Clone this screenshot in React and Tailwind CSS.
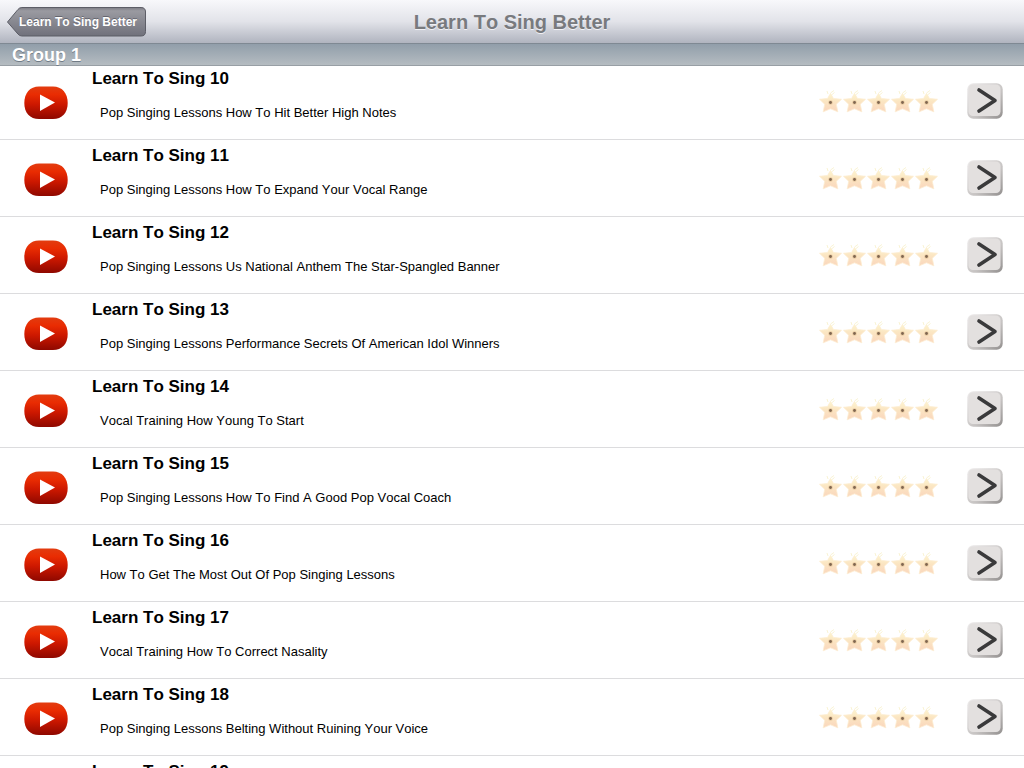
import React from "react";

const lessons = [
  { id: 10, text: "Pop Singing Lessons How To Hit Better High Notes" },
  { id: 11, text: "Pop Singing Lessons How To Expand Your Vocal Range" },
  { id: 12, text: "Pop Singing Lessons Us National Anthem The Star-Spangled Banner" },
  { id: 13, text: "Pop Singing Lessons Performance Secrets Of American Idol Winners" },
  { id: 14, text: "Vocal Training How Young To Start" },
  { id: 15, text: "Pop Singing Lessons How To Find A Good Pop Vocal Coach" },
  { id: 16, text: "How To Get The Most Out Of Pop Singing Lessons" },
  { id: 17, text: "Vocal Training How To Correct Nasality" },
  { id: 18, text: "Pop Singing Lessons Belting Without Ruining Your Voice" },
  { id: 19, text: "" },
];

function Gradients() {
  return (
    <svg width="0" height="0" className="absolute" aria-hidden="true">
      <defs>
        <linearGradient id="red" x1="0" y1="0" x2="0" y2="1">
          <stop offset="0" stopColor="#e23c10" />
          <stop offset="0.25" stopColor="#e92c02" />
          <stop offset="0.55" stopColor="#cd1800" />
          <stop offset="1" stopColor="#8e0800" />
        </linearGradient>
        <linearGradient id="star" x1="0" y1="0" x2="0" y2="1">
          <stop offset="0" stopColor="#fdf5cf" />
          <stop offset="0.45" stopColor="#fbe5c2" />
          <stop offset="1" stopColor="#fad6bd" />
        </linearGradient>
        <linearGradient id="key" x1="0" y1="0" x2="1" y2="1">
          <stop offset="0" stopColor="#efeded" />
          <stop offset="0.6" stopColor="#c6c3c2" />
          <stop offset="1" stopColor="#918e8d" />
        </linearGradient>
      </defs>
    </svg>
  );
}

function PlayIcon() {
  return (
    <svg width="44" height="34" viewBox="0 0 44 34" aria-hidden="true">
      <path
        d="M15 .5H29C38 .5 43.700 7 43.700 17S38 33 29 33H15C6 33 .3 27 .3 17S6 .5 15 .5Z"
        fill="url(#red)"
      />
      <path d="M16 8.500 31 16.500 16 25Z" fill="#fff" />
    </svg>
  );
}

function Star() {
  return (
    <svg width="24" height="24" viewBox="0 0 24 24" aria-hidden="true">
      <path
        d="M11.500 3.500 14.500 8.500 22.500 9.300 17.300 14.200 18.800 21.800 11.500 18.800 4.200 21.800 5.700 14.200 .5 9.300 8.500 8.500Z"
        fill="url(#star)"
        stroke="#fcecd0"
        strokeWidth="0.8"
        strokeLinejoin="round"
      />
      <path d="M9 4 8 1M11.500 3 15 .5M12.500 5 15.500 2.500" stroke="#f6eec2" strokeWidth="0.7" />
      <circle cx="11.500" cy="12.500" r="2.300" fill="#dcb98a" opacity="0.6" />
      <circle cx="11.500" cy="12.500" r="1.400" fill="#7f6650" />
    </svg>
  );
}

function ArrowIcon() {
  return (
    <svg width="36" height="36" viewBox="0 0 36 36" aria-hidden="true">
      <rect x="0.3" y="0.3" width="35.400" height="35.400" rx="6" fill="url(#key)" />
      <rect x="1.500" y="1.500" width="32" height="31.500" rx="4.500" fill="#e3e0df" />
      <path
        d="M12 7 28 17.500 12 28"
        fill="none"
        stroke="#3a3a3b"
        strokeWidth="3.600"
        strokeLinecap="round"
        strokeLinejoin="round"
      />
    </svg>
  );
}

function BackButton() {
  return (
    <button type="button" className="relative h-[30px] pr-[9px] pl-3 text-xs font-bold text-white">
      <svg
        className="absolute inset-0 h-full w-full"
        viewBox="0 0 140 30"
        preserveAspectRatio="none"
        aria-hidden="true"
      >
        <defs>
          <linearGradient id="back" x1="0" y1="0" x2="0" y2="1">
            <stop offset="0" stopColor="#7c7c84" />
            <stop offset="0.12" stopColor="#9a9aa1" />
            <stop offset="1" stopColor="#70717b" />
          </linearGradient>
        </defs>
        <path
          d="M15 .5H135Q139.500 .5 139.500 5V24.500Q139.500 29 135 29H15Q12.500 29 11 27L.5 15 11 2.500Q12.500 .5 15 .5Z"
          fill="url(#back)"
          stroke="#5b5c65"
        />
      </svg>
      <span className="relative [text-shadow:0_-1px_0_#65666f]">Learn To Sing Better</span>
    </button>
  );
}

function LessonRow({ id, text }) {
  return (
    <li className="flex h-[77px] items-start border-b border-[#dcdcde] pr-[21px] pl-6">
      <button type="button" aria-label={`Play lesson ${id}`} className="mt-[23px] shrink-0">
        <PlayIcon />
      </button>
      <div className="ml-6 min-w-0 flex-1 pt-1.5">
        <h2 className="text-[17px] leading-5 font-bold">Learn To Sing {id}</h2>
        <p className="mt-4 truncate pl-2 text-[13px] leading-4">{text}</p>
      </div>
      <div role="img" aria-label="Five stars" className="mt-[27px] flex shrink-0">
        <Star />
        <Star />
        <Star />
        <Star />
        <Star />
      </div>
      <button type="button" aria-label={`Open lesson ${id}`} className="mt-5 ml-7 shrink-0">
        <ArrowIcon />
      </button>
    </li>
  );
}

export default function App() {
  return (
    <div className="flex h-screen flex-col overflow-hidden bg-white font-['Liberation_Sans',Arial,sans-serif] text-black [font-kerning:none]">
      <Gradients />
      <header className="relative z-10 grid h-11 shrink-0 grid-cols-[1fr_auto_1fr] items-center border-b border-[#7f8993] bg-linear-to-b from-[#f8f8fb] via-[#e2e3e9] to-[#b0b4bf] px-[7px]">
        <div className="flex">
          <BackButton />
        </div>
        <h1 className="text-xl leading-6 font-bold text-[#787a7e] [text-shadow:0_1px_0_#f0f0f4]">
          Learn To Sing Better
        </h1>
      </header>
      <div className="relative z-10 h-[22px] shrink-0 border-b border-[#989fa5] bg-linear-to-b from-[#919eaa] to-[#b5bcc1] px-3 text-lg leading-[22px] font-bold text-white [text-shadow:0_1px_0_#707b85]">
        Group 1
      </div>
      <main className="min-h-0 flex-1 overflow-hidden">
        <ul className="-mt-[3px]">
          {lessons.map((lesson) => (
            <LessonRow key={lesson.id} id={lesson.id} text={lesson.text} />
          ))}
        </ul>
      </main>
    </div>
  );
}
